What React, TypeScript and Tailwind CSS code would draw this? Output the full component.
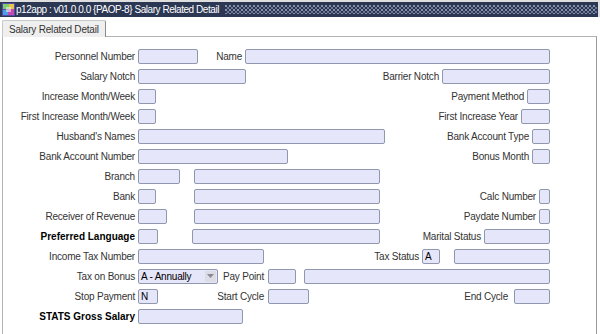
import React from "react";

function Inp({ w, children }: { w: string; children?: React.ReactNode }) {
  return (
    <div
      className={`${w} h-[15px] shrink-0 rounded-[2px] border border-[#8f98ae] bg-[#e6e6fa] pl-[2px] text-[10px] leading-[13px] text-black`}
    >
      {children}
    </div>
  );
}

function Lbl({ children, bold }: { children: React.ReactNode; bold?: boolean }) {
  return (
    <span
      className={`whitespace-nowrap text-[10px] mr-[3px] ${
        bold ? "font-bold text-black" : "tracking-[-0.2px] text-[#333]"
      }`}
    >
      {children}
    </span>
  );
}

function Row({ children }: { children: React.ReactNode }) {
  return <div className="flex h-[20px] items-center">{children}</div>;
}

function LeftLbl({ children, bold }: { children: React.ReactNode; bold?: boolean }) {
  return (
    <div className="flex w-[135px] shrink-0 justify-end">
      <Lbl bold={bold}>{children}</Lbl>
    </div>
  );
}

const Sp = () => <div className="flex-1" />;

export default function App() {
  return (
    <div className="h-[334px] w-[600px] overflow-hidden bg-white font-['Liberation_Sans',Arial,sans-serif]">
      {/* title bar */}
      <div className="h-[17px] bg-[#dedede] pt-[2px] pr-[2px]">
        <div className="flex h-[15px] items-center bg-[#2b3753]">
          <svg width="13" height="13" viewBox="0 0 13 13" className="ml-[2px] shrink-0">
            <rect x="0" y="0" width="13" height="13" fill="#5a4aa8" />
            <rect x="1" y="1" width="6" height="5" fill="#7ccf6a" />
            <rect x="7" y="1" width="5" height="5" fill="#e8c64a" />
            <rect x="1" y="7" width="5" height="5" fill="#4aa0e8" />
            <rect x="6" y="6" width="6" height="6" fill="#c24ab0" />
            <rect x="4" y="4" width="5" height="5" fill="#f0f0f0" opacity="0.6" />
          </svg>
          <span className="ml-[1px] whitespace-nowrap text-[10px] tracking-[-0.45px] text-white">
            p12app : v01.0.0.0 {"{PAOP-8}"} Salary Related Detail
          </span>
          <div className="ml-[6px] mr-[1px] h-[9px] flex-1 bg-[radial-gradient(circle_at_1px_1px,#8794b0_0.7px,transparent_1px),radial-gradient(circle_at_3px_3px,#6d7a96_0.7px,transparent_1px)] bg-[length:4px_4px]" />
        </div>
      </div>

      {/* tab strip */}
      <div className="flex h-[19px] items-end pl-[2px]">
        <div className="relative top-[1px] flex h-[17px] w-[104px] items-center rounded-t-[2px] border-l border-t border-r border-[#c8c8c8] border-r-[#8a8a8a] bg-[#efefef] pl-[6px]">
          <span className="whitespace-nowrap text-[10px] tracking-[-0.2px] text-[#333]">
            Salary Related Detail
          </span>
        </div>
      </div>

      {/* panel */}
      <div className="ml-[2px] mr-[3px] h-[300px] border-l border-r border-t border-[#b4b4b4] border-r-[#9a9a9a] pr-[46px] pt-[9px]">
        <Row>
          <LeftLbl>Personnel Number</LeftLbl>
          <Inp w="w-[60px]" />
          <Sp />
          <Lbl>Name</Lbl>
          <Inp w="w-[305px]" />
        </Row>
        <Row>
          <LeftLbl>Salary Notch</LeftLbl>
          <Inp w="w-[108px]" />
          <Sp />
          <Lbl>Barrier Notch</Lbl>
          <Inp w="w-[108px]" />
        </Row>
        <Row>
          <LeftLbl>Increase Month/Week</LeftLbl>
          <Inp w="w-[18px]" />
          <Sp />
          <Lbl>Payment Method</Lbl>
          <Inp w="w-[23px]" />
        </Row>
        <Row>
          <LeftLbl>First Increase Month/Week</LeftLbl>
          <Inp w="w-[18px]" />
          <Sp />
          <Lbl>First Increase Year</Lbl>
          <Inp w="w-[29px]" />
        </Row>
        <Row>
          <LeftLbl>Husband's Names</LeftLbl>
          <Inp w="w-[247px]" />
          <Sp />
          <Lbl>Bank Account Type</Lbl>
          <Inp w="w-[18px]" />
        </Row>
        <Row>
          <LeftLbl>Bank Account Number</LeftLbl>
          <Inp w="w-[150px]" />
          <Sp />
          <Lbl>Bonus Month</Lbl>
          <Inp w="w-[18px]" />
        </Row>
        <Row>
          <LeftLbl>Branch</LeftLbl>
          <Inp w="w-[42px]" />
          <Inp w="ml-[14px] w-[186px]" />
        </Row>
        <Row>
          <LeftLbl>Bank</LeftLbl>
          <Inp w="w-[18px]" />
          <Inp w="ml-[38px] w-[186px]" />
          <Sp />
          <Lbl>Calc Number</Lbl>
          <Inp w="w-[11px]" />
        </Row>
        <Row>
          <LeftLbl>Receiver of Revenue</LeftLbl>
          <Inp w="w-[29px]" />
          <Inp w="ml-[27px] w-[186px]" />
          <Sp />
          <Lbl>Paydate Number</Lbl>
          <Inp w="w-[11px]" />
        </Row>
        <Row>
          <LeftLbl bold>Preferred Language</LeftLbl>
          <Inp w="w-[20px]" />
          <Inp w="ml-[34px] w-[188px]" />
          <Sp />
          <Lbl>Marital Status</Lbl>
          <Inp w="w-[66px]" />
        </Row>
        <Row>
          <LeftLbl>Income Tax Number</LeftLbl>
          <Inp w="w-[126px]" />
          <Sp />
          <Lbl>Tax Status</Lbl>
          <Inp w="w-[18px]">A</Inp>
          <Inp w="ml-[14px] w-[96px]" />
        </Row>
        <Row>
          <LeftLbl>Tax on Bonus</LeftLbl>
          <div className="flex h-[15px] w-[80px] shrink-0 items-center rounded-[2px] border border-[#8f98ae] bg-[#e6e6fa] pl-[2px]">
            <span className="flex-1 whitespace-nowrap text-[10px] leading-[13px] tracking-[-0.2px] text-black">
              A - Annually
            </span>
            <div className="mr-[1px] flex h-[11px] w-[11px] items-center justify-center bg-[#dcdce4]">
              <svg width="7" height="4" viewBox="0 0 7 4">
                <path d="M0 0 L7 0 L3.5 4 Z" fill="#8a8a94" />
              </svg>
            </div>
          </div>
          <div className="flex w-[46px] shrink-0 justify-end">
            <span className="whitespace-nowrap text-[10px] tracking-[-0.2px] text-[#333]">Pay Point</span>
          </div>
          <Inp w="ml-[4px] w-[28px]" />
          <Inp w="ml-[8px] flex-1" />
        </Row>
        <Row>
          <LeftLbl>Stop Payment</LeftLbl>
          <Inp w="w-[20px]">N</Inp>
          <div className="flex w-[106px] shrink-0 justify-end">
            <span className="whitespace-nowrap text-[10px] tracking-[-0.2px] text-[#333]">Start Cycle</span>
          </div>
          <Inp w="ml-[4px] w-[41px]" />
          <Sp />
          <span className="mr-[6px] whitespace-nowrap text-[10px] tracking-[-0.2px] text-[#333]">End Cycle</span>
          <Inp w="w-[36px]" />
        </Row>
        <Row>
          <LeftLbl bold>STATS Gross Salary</LeftLbl>
          <Inp w="w-[105px]" />
        </Row>
      </div>
    </div>
  );
}
